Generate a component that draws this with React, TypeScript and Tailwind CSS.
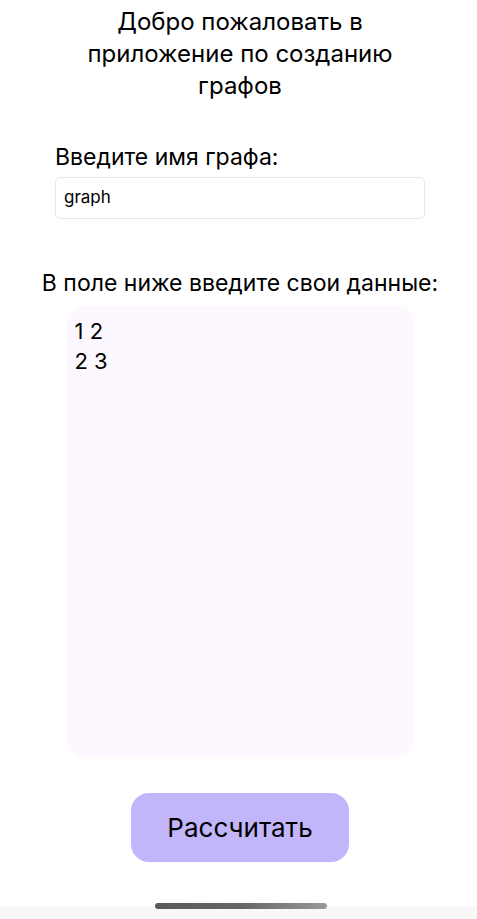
import React from "react";

export default function App() {
  return (
    <div
      className="relative w-full h-[919px] bg-white flex flex-col items-center pl-[3px] overflow-hidden text-black"
      style={{ fontFamily: "Inter, 'Noto Sans', sans-serif" }}
    >
      <h1 className="mt-[6px] w-[340px] text-center text-[24px] leading-[32px] font-normal">
        Добро пожаловать в приложение по созданию графов
      </h1>

      <div className="mt-[41px] w-[370px] flex flex-col">
        <label className="text-[23px] leading-[28px]">Введите имя графа:</label>
        <div className="mt-[6px] h-[42px] rounded-[6px] border border-[#e6e6e6] flex items-center px-[8px] text-[17px]">
          graph
        </div>
      </div>

      <p className="mt-[50px] text-[23px] leading-[28px]">В поле ниже введите свои данные:</p>

      <div className="mt-[9px] w-[347px] h-[451px] rounded-[16px] bg-[#fdf8ff] px-[8px] pt-[10px] text-[22px] leading-[30px]">
        <div>1 2</div>
        <div>2 3</div>
      </div>

      <button className="mt-[36px] w-[218px] h-[69px] rounded-[18px] bg-[#c2b5f9] text-[26px]">
        Рассчитать
      </button>

      <div className="absolute left-0 right-0 bottom-0 h-[13px] bg-[#f8f8f8]" />
      <div className="absolute left-[155px] top-[903px] w-[172px] h-[6px] rounded-full bg-gradient-to-r from-[#5a5a5a] via-[#666666] to-[#9a9a9a]" />
    </div>
  );
}
